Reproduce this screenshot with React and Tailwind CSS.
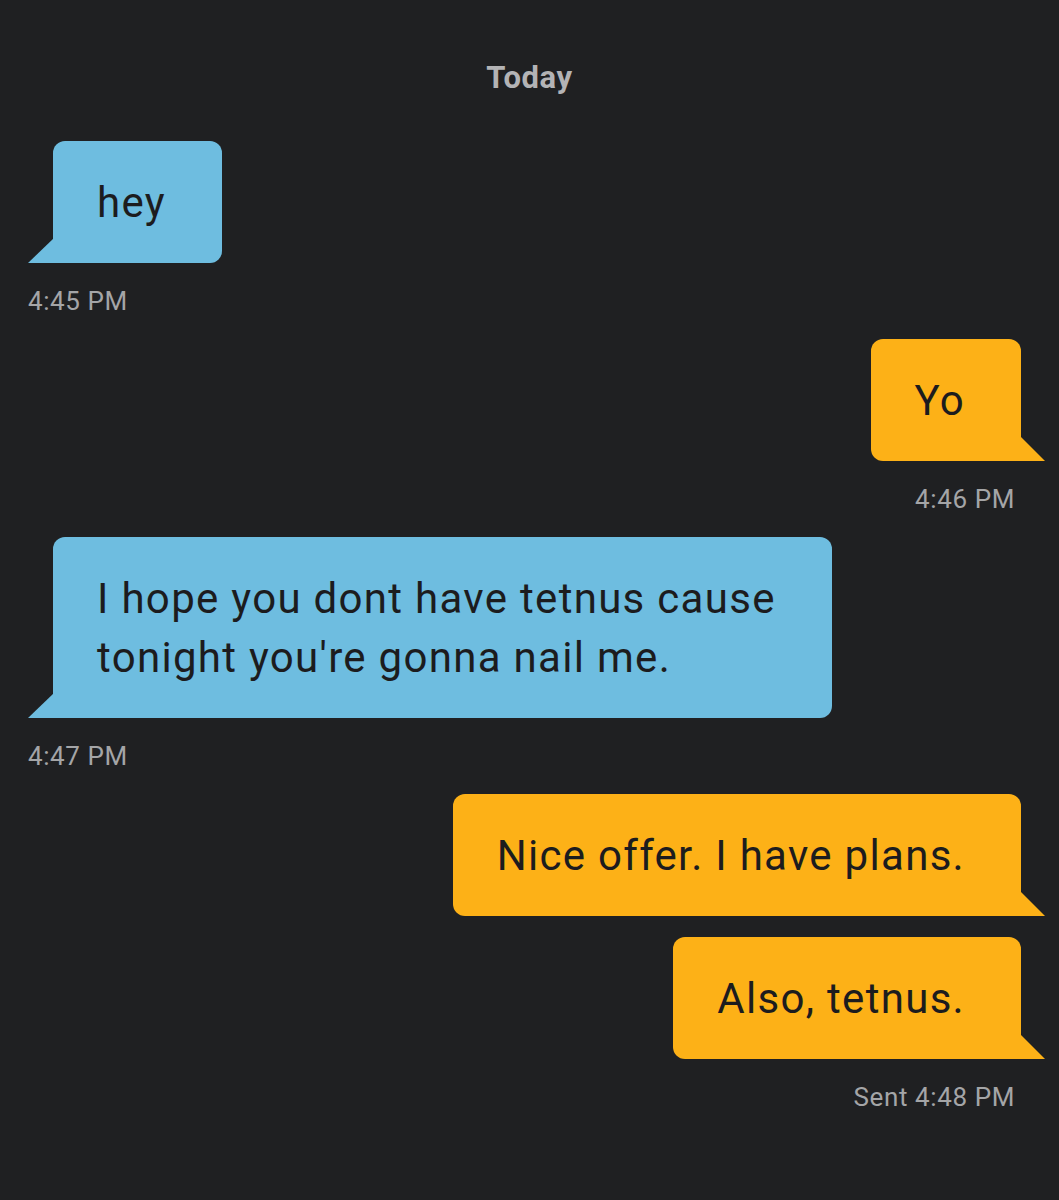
const font = { fontFamily: 'Roboto, "Liberation Sans", sans-serif' }

function Tail({ side, color }) {
  if (side === 'left') {
    return (
      <svg className="absolute bottom-0 -left-[25px]" width="26" height="25" viewBox="0 0 26 25">
        <polygon points="26,0 26,25 0,25" fill={color} />
      </svg>
    )
  }
  return (
    <svg className="absolute bottom-0 -right-[24px]" width="25" height="25" viewBox="0 0 25 25">
      <polygon points="0,0 25,25 0,25" fill={color} />
    </svg>
  )
}

function Bubble({ side, children }) {
  const left = side === 'left'
  const color = left ? '#6ebde0' : '#fdb117'
  return (
    <div
      className={
        'relative pl-[44px] pr-[56px] pt-[32px] pb-[31px] text-[42px] leading-[59px] tracking-[1.3px] text-[#1c1c1e] ' +
        (left
          ? 'self-start bg-[#6ebde0] rounded-[12px] rounded-bl-none'
          : 'self-end bg-[#fdb117] rounded-[12px] rounded-br-none')
      }
    >
      {children}
      <Tail side={side} color={color} />
    </div>
  )
}

function Stamp({ side, children }) {
  return (
    <div
      className={
        'mt-[23px] mb-[23px] text-[26px] leading-[30px] tracking-[0.6px] text-[#a4a5a7] ' +
        (side === 'left' ? 'self-start -ml-[25px]' : 'self-end mr-[6px]')
      }
    >
      {children}
    </div>
  )
}

export default function App() {
  return (
    <div className="min-h-screen w-[1059px] bg-[#1f2022]" style={font}>
      <div className="pt-[60px] text-center text-[31px] leading-[36px] font-bold tracking-[0.6px] text-[#b3b3b5]">
        Today
      </div>
      <div className="flex flex-col pl-[53px] pr-[38px] pt-[45px] pb-[60px]">
        <Bubble side="left">hey</Bubble>
        <Stamp side="left">4:45 PM</Stamp>

        <Bubble side="right">Yo</Bubble>
        <Stamp side="right">4:46 PM</Stamp>

        <Bubble side="left">
          I hope you dont have tetnus cause
          <br />
          tonight you're gonna nail me.
        </Bubble>
        <Stamp side="left">4:47 PM</Stamp>

        <Bubble side="right">Nice offer. I have plans.</Bubble>
        <div className="h-[21px]" />
        <Bubble side="right">Also, tetnus.</Bubble>
        <Stamp side="right">Sent 4:48 PM</Stamp>
      </div>
    </div>
  )
}
